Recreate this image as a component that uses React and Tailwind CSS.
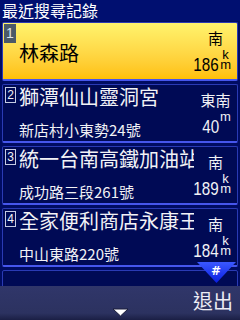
import React from 'react'

const rows = [
  { n: 1, title: '林森路', dir: '南', dist: '186', unit: 'km', active: true },
  { n: 2, title: '獅潭仙山靈洞宮', sub: '新店村小東勢24號', dir: '東南', dist: '40', unit: 'm' },
  { n: 3, title: '統一台南高鐵加油站', sub: '成功路三段261號', dir: '南', dist: '189', unit: 'km' },
  { n: 4, title: '全家便利商店永康王', sub: '中山東路220號', dir: '南', dist: '184', unit: 'km' },
]

function Distance({ value, unit }) {
  return (
    <div className="mt-[3px] flex items-start justify-end pr-[6px]">
      <span className="mt-[5px] inline-block origin-right scale-x-[0.8] font-['Liberation_Sans',sans-serif] text-[19px] leading-[19px]">
        {value}
      </span>
      <div className="ml-[1px] flex w-[11px] flex-col items-center font-['Liberation_Sans',sans-serif] text-[13px] leading-[10px]">
        {unit === 'km' ? (
          <>
            <span>k</span>
            <span>m</span>
          </>
        ) : (
          <span>m</span>
        )}
      </div>
    </div>
  )
}

function Row({ n, title, sub, dir, dist, unit, active }) {
  const base =
    'flex h-[59px] shrink-0 rounded-[2px] border border-[#2a3ab4] border-b-2 border-b-[#4656ec]'
  if (active) {
    return (
      <div className={base + ' bg-linear-to-b from-[#fff36c] to-[#ffc000] text-black'}>
        <div className="w-[16px] shrink-0 pl-[1px] pt-[1px]">
          <div className="flex h-[19px] w-[12px] items-center justify-center bg-[#4b5968] font-['Liberation_Sans',sans-serif] text-[14px] text-[#dfe3e8]">
            {n}
          </div>
        </div>
        <div className="flex min-w-0 flex-1 items-center overflow-hidden whitespace-nowrap pt-[3px] text-[20px] leading-[24px]">
          {title}
        </div>
        <div className="flex w-[43px] shrink-0 flex-col">
          <div className="pt-[6px] text-center text-[15px] leading-[18px]">{dir}</div>
          <Distance value={dist} unit={unit} />
        </div>
      </div>
    )
  }
  return (
    <div className={base + ' bg-[#000a55] text-[#f2f2f6]'}>
      <div className="w-[16px] shrink-0 pl-[2px] pt-[2px]">
        <div className="flex h-[16px] w-[11px] items-center justify-center border border-[#c4cbe4] font-['Liberation_Sans',sans-serif] text-[12px] leading-[12px]">
          {n}
        </div>
      </div>
      <div className="min-w-0 flex-1 overflow-hidden whitespace-nowrap">
        <div className="text-[20px] leading-[23px]">{title}</div>
        <div className="mt-[13px] text-[15px] leading-[18px]">{sub}</div>
      </div>
      <div className="flex w-[43px] shrink-0 flex-col">
        <div className="pt-[6px] text-center text-[15px] leading-[18px]">{dir}</div>
        <Distance value={dist} unit={unit} />
      </div>
    </div>
  )
}

export default function App() {
  return (
    <div className="relative flex h-[320px] w-[240px] flex-col overflow-hidden bg-[#000c62] font-['Noto_Sans_CJK_TC','Noto_Sans',sans-serif]">
      <div className="h-[21px] shrink-0 bg-[#000f70] px-[2px] text-[16px] leading-[21px] text-white">
        最近搜尋記錄
      </div>

      <div className="flex h-[265px] shrink-0 flex-col gap-[3px] overflow-hidden px-[2px] pt-[1px]">
        {rows.map((r) => (
          <Row key={r.n} {...r} />
        ))}
        <div className="h-[59px] shrink-0 rounded-[2px] border border-[#2a3ab4] bg-[#000a55]" />
      </div>

      <div className="relative flex h-[34px] shrink-0 justify-end bg-linear-to-b from-[#30366a] via-[#2c3260] via-80% to-[#1b1f45] pr-[7px] pt-[3px]">
        <span className="text-[20px] leading-[24px] text-[#ececf4]">退出</span>
        <svg className="absolute bottom-[3px] left-[112px]" width="17" height="9" viewBox="0 0 17 9">
          <polygon points="1,1 16,1 8.5,8" fill="#ffffff" stroke="#1a1d3a" strokeWidth="1" />
        </svg>
      </div>

      <div className="absolute left-[197px] top-[262px] h-[21px] w-[39px]">
        <svg className="absolute inset-0" width="39" height="21" viewBox="0 0 39 21">
          <defs>
            <linearGradient id="hashg" x1="0" y1="0" x2="0" y2="1">
              <stop offset="0" stopColor="#3a58ff" />
              <stop offset="1" stopColor="#0a1ee0" />
            </linearGradient>
          </defs>
          <polygon points="0,0 39,0 19.5,21" fill="url(#hashg)" />
        </svg>
        <span className="absolute left-[14px] top-[2px] font-['DejaVu_Sans',sans-serif] text-[12px] font-bold leading-[14px] text-white">
          #
        </span>
      </div>
    </div>
  )
}
